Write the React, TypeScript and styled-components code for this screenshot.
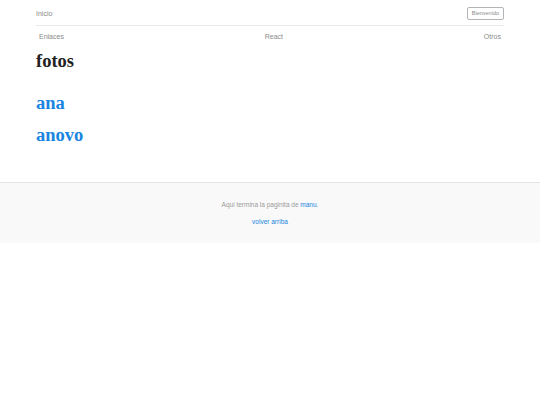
import React from "react";
import styled, { createGlobalStyle } from "styled-components";

const Global = createGlobalStyle`
  html, body { margin: 0; padding: 0; background: #fff; }
  body { font-family: "Liberation Sans", Arial, sans-serif; }
`;

const Container = styled.div`
  width: 468px;
  margin: 0 auto;
`;

const Header = styled.header`
  display: flex;
  align-items: center;
  justify-content: space-between;
  height: 26px;
  border-bottom: 1px solid #e9e9e9;
  box-sizing: border-box;
  padding-top: 1px;
`;

const HeaderLink = styled.a`
  font-size: 7px;
  color: #8a8a8a;
  text-decoration: none;
`;

const Button = styled.button`
  font-family: "Liberation Sans", Arial, sans-serif;
  font-size: 5.5px;
  color: #8a8a8a;
  background: #fff;
  border: 1px solid #b4b4b4;
  border-radius: 2px;
  height: 13px;
  padding: 0 4px;
  line-height: 11px;
`;

const Nav = styled.nav`
  display: flex;
  justify-content: space-between;
  padding: 5px 3px 0;
  height: 10px;
  align-items: center;
`;

const NavLink = styled.a`
  font-size: 7px;
  color: #8a8a8a;
  text-decoration: none;
`;

const Title = styled.h1<{ $blue?: boolean }>`
  font-family: "Liberation Serif", "DejaVu Serif", serif;
  font-weight: 700;
  font-size: 18.5px;
  color: ${(p) => (p.$blue ? "#1a85e0" : "#222")};
  margin: 0;
  line-height: 20px;
`;

const Main = styled.main`
  display: flex;
  flex-direction: column;
  padding-top: 10px;
  height: 141px;
  box-sizing: border-box;
`;

const List = styled.div`
  display: flex;
  flex-direction: column;
  gap: 12px;
  margin-top: 22px;
`;

const Footer = styled.footer`
  background: #f9f9f9;
  border-top: 1px solid #e5e5e5;
  height: 61px;
  box-sizing: border-box;
  display: flex;
  flex-direction: column;
  align-items: center;
  padding-top: 17px;
  gap: 8px;
  font-size: 6.5px;
  color: #999;
`;

const P = styled.p`
  margin: 0;
  line-height: 9px;
`;

const FLink = styled.a`
  color: #1a85e0;
  text-decoration: none;
`;

export default function App() {
  return (
    <>
      <Global />
      <Container>
        <Header>
          <HeaderLink href="#">Inicio</HeaderLink>
          <Button>Bienvenido</Button>
        </Header>
        <Nav>
          <NavLink href="#">Enlaces</NavLink>
          <NavLink href="#">React</NavLink>
          <NavLink href="#">Otros</NavLink>
        </Nav>
        <Main>
          <Title>fotos</Title>
          <List>
            <Title $blue>ana</Title>
            <Title $blue>anovo</Title>
          </List>
        </Main>
      </Container>
      <Footer>
        <P>
          Aqui termina la paginita de <FLink href="#">manu</FLink>.
        </P>
        <P>
          <FLink href="#">volver arriba</FLink>
        </P>
      </Footer>
    </>
  );
}
